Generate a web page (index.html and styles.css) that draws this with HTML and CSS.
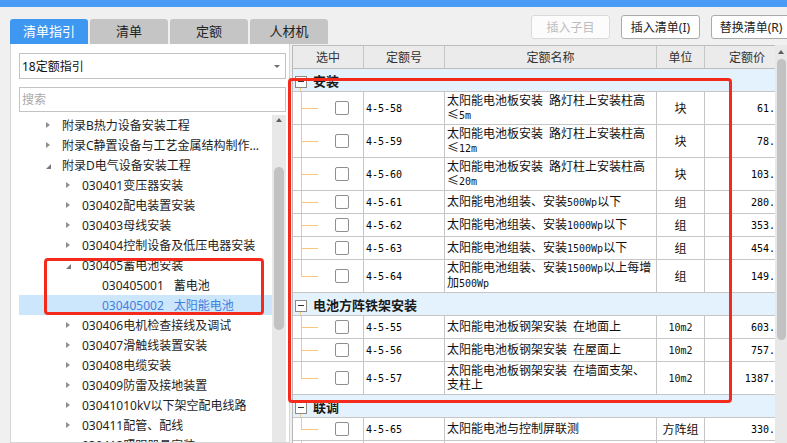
FILE: index.html
```html
<!DOCTYPE html>
<html lang="zh-CN">
<head>
<meta charset="utf-8">
<title>清单指引</title>
<link rel="stylesheet" href="styles.css">
</head>
<body>
<div class="screen">
  <div class="titlebar"></div>
  <div class="band">
    <div class="tabs">
      <div class="tab active">清单指引</div>
      <div class="tab">清单</div>
      <div class="tab">定额</div>
      <div class="tab">人材机</div>
    </div>
    <div class="actions">
      <button class="btn" disabled>插入子目</button>
      <button class="btn">插入清单(I)</button>
      <button class="btn wide">替换清单(R)</button>
    </div>
  </div>
  <div class="work">
    <div class="left">
      <div class="select"><span>18定额指引</span><i class="caret"></i></div>
      <div class="search">搜索</div>
      <div class="treebox">
        <ul class="tree">
          <li class="l1"><i class="tw"></i><span class="lbl">附录B热力设备安装工程</span></li>
          <li class="l1"><i class="tw"></i><span class="lbl">附录C静置设备与工艺金属结构制作安装工程</span></li>
          <li class="l1"><i class="tw open"></i><span class="lbl">附录D电气设备安装工程</span></li>
          <li class="l2"><i class="tw"></i><span class="lbl">030401变压器安装</span></li>
          <li class="l2"><i class="tw"></i><span class="lbl">030402配电装置安装</span></li>
          <li class="l2"><i class="tw"></i><span class="lbl">030403母线安装</span></li>
          <li class="l2"><i class="tw"></i><span class="lbl">030404控制设备及低压电器安装</span></li>
          <li class="l2"><i class="tw open"></i><span class="lbl">030405蓄电池安装</span></li>
          <li class="l3"><span class="lbl"><span class="qd">030405001</span>蓄电池</span></li>
          <li class="l3 selected"><span class="lbl"><span class="qd">030405002</span>太阳能电池</span></li>
          <li class="l2"><i class="tw"></i><span class="lbl">030406电机检查接线及调试</span></li>
          <li class="l2"><i class="tw"></i><span class="lbl">030407滑触线装置安装</span></li>
          <li class="l2"><i class="tw"></i><span class="lbl">030408电缆安装</span></li>
          <li class="l2"><i class="tw"></i><span class="lbl">030409防雷及接地装置</span></li>
          <li class="l2"><i class="tw"></i><span class="lbl">03041010kV以下架空配电线路</span></li>
          <li class="l2"><i class="tw"></i><span class="lbl">030411配管、配线</span></li>
          <li class="l2"><i class="tw"></i><span class="lbl">030412照明器具安装</span></li>
        </ul>
        <div class="vscroll tree-scroll"><i class="up"></i><div class="thumb"></div></div>
      </div>
    </div>
    <div class="right">
      <div class="gridwrap">
        <table class="grid">
          <thead>
            <tr>
              <th class="c-sel">选中</th>
              <th class="c-code">定额号</th>
              <th class="c-name">定额名称</th>
              <th class="c-unit">单位</th>
              <th class="c-price">定额价</th>
            </tr>
          </thead>
          <tbody>
            <tr class="group"><td colspan="5"><span class="gbox"></span>安装</td></tr>
            <tr class="tall">
              <td class="sel"><span class="chk"></span></td>
              <td class="code">4-5-58</td>
              <td class="name">太阳能电池板安装 路灯柱上安装柱高≤<span class="sim">5m</span></td>
              <td class="unit">块</td>
              <td class="price">61.23</td>
            </tr>
            <tr class="tall">
              <td class="sel"><span class="chk"></span></td>
              <td class="code">4-5-59</td>
              <td class="name">太阳能电池板安装 路灯柱上安装柱高≤<span class="sim">12m</span></td>
              <td class="unit">块</td>
              <td class="price">78.86</td>
            </tr>
            <tr class="tall">
              <td class="sel"><span class="chk"></span></td>
              <td class="code">4-5-60</td>
              <td class="name">太阳能电池板安装 路灯柱上安装柱高≤<span class="sim">20m</span></td>
              <td class="unit">块</td>
              <td class="price">103.06</td>
            </tr>
            <tr>
              <td class="sel"><span class="chk"></span></td>
              <td class="code">4-5-61</td>
              <td class="name">太阳能电池组装、安装<span class="sim">500Wp</span>以下</td>
              <td class="unit">组</td>
              <td class="price">280.04</td>
            </tr>
            <tr>
              <td class="sel"><span class="chk"></span></td>
              <td class="code">4-5-62</td>
              <td class="name">太阳能电池组装、安装<span class="sim">1000Wp</span>以下</td>
              <td class="unit">组</td>
              <td class="price">353.86</td>
            </tr>
            <tr>
              <td class="sel"><span class="chk"></span></td>
              <td class="code">4-5-63</td>
              <td class="name">太阳能电池组装、安装<span class="sim">1500Wp</span>以下</td>
              <td class="unit">组</td>
              <td class="price">454.06</td>
            </tr>
            <tr class="tall">
              <td class="sel last"><span class="chk"></span></td>
              <td class="code">4-5-64</td>
              <td class="name">太阳能电池组装、安装<span class="sim">1500Wp</span>以上每增加<span class="sim">500Wp</span></td>
              <td class="unit">组</td>
              <td class="price">149.56</td>
            </tr>
            <tr class="group"><td colspan="5"><span class="gbox"></span>电池方阵铁架安装</td></tr>
            <tr>
              <td class="sel"><span class="chk"></span></td>
              <td class="code">4-5-55</td>
              <td class="name">太阳能电池板钢架安装 在地面上</td>
              <td class="unit sim">10m2</td>
              <td class="price">603.55</td>
            </tr>
            <tr>
              <td class="sel"><span class="chk"></span></td>
              <td class="code">4-5-56</td>
              <td class="name">太阳能电池板钢架安装 在屋面上</td>
              <td class="unit sim">10m2</td>
              <td class="price">757.55</td>
            </tr>
            <tr class="tall">
              <td class="sel last"><span class="chk"></span></td>
              <td class="code">4-5-57</td>
              <td class="name">太阳能电池板钢架安装 在墙面支架、支柱上</td>
              <td class="unit sim">10m2</td>
              <td class="price">1387.23</td>
            </tr>
            <tr class="group"><td colspan="5"><span class="gbox"></span>联调</td></tr>
            <tr>
              <td class="sel last"><span class="chk"></span></td>
              <td class="code">4-5-65</td>
              <td class="name">太阳能电池与控制屏联测</td>
              <td class="unit">方阵组</td>
              <td class="price">330.23</td>
            </tr>
            <tr>
              <td class="sel"></td>
              <td class="code"></td>
              <td class="name"></td>
              <td class="unit"></td>
              <td class="price"></td>
            </tr>
          </tbody>
        </table>
      </div>
      <div class="vscroll grid-scroll"><i class="up"></i><div class="thumb"></div></div>
    </div>
  </div>
  <div class="mark mark-tree"></div>
  <div class="mark mark-grid"></div>
</div>
</body>
</html>
```
FILE: styles.css
```css
* { box-sizing: border-box; }

html, body {
  margin: 0;
  padding: 0;
  overflow: hidden;
}

body {
  width: 787px;
  height: 443px;
  background: #f0f0f0;
  font-family: "Noto Sans", "Noto Sans CJK SC", sans-serif;
  font-size: 12px;
  color: #222;
}

.screen {
  position: relative;
  width: 787px;
  height: 443px;
  overflow: hidden;
}

.titlebar {
  height: 7px;
  background: #4a9bf5;
}

/* ---------- tabs + toolbar band ---------- */
.band {
  display: flex;
  height: 37px;
}

.tabs {
  display: flex;
  gap: 2px;
  margin: 12px 0 0 10px;
  height: 25px;
}

.tab {
  width: 78px;
  height: 25px;
  line-height: 25px;
  text-align: center;
  background: #c5c5c5;
  color: #222;
  font-size: 13px;
  border-radius: 3px 3px 0 0;
}

.tab.active {
  background: #3e97f0;
  color: #fff;
}

.actions {
  display: flex;
  gap: 11px;
  margin: 8px -4px 0 auto;
  height: 24px;
}

.btn {
  width: 79px;
  height: 24px;
  padding: 0;
  border: 1px solid #ababab;
  border-radius: 3px;
  background: #fff;
  color: #222;
  font-family: inherit;
  font-size: 12px;
  flex-shrink: 0;
}

.btn.wide { width: 80px; }

.btn:disabled {
  color: #bdbdbd;
  border-color: #dadada;
  background: #fcfcfc;
}

/* ---------- work area ---------- */
.work {
  display: flex;
  height: 399px;
}

.left {
  width: 280px;
  margin-left: 10px;
  background: #fff;
  border: 1px solid #d6d6d6;
  border-top: 0;
  padding: 9px 3px 0 8px;
  display: flex;
  flex-direction: column;
}

.select {
  height: 26px;
  border: 1px solid #c3c3c3;
  display: flex;
  align-items: center;
  justify-content: space-between;
  padding: 0 5px 0 2px;
  color: #111;
}

.caret {
  width: 0;
  height: 0;
  border-top: 3px solid #707070;
  border-left: 3px solid transparent;
  border-right: 3px solid transparent;
}

.search {
  height: 25px;
  margin-top: 8px;
  border: 1px solid #c3c3c3;
  color: #a9a9a9;
  padding-left: 2px;
  line-height: 23px;
}

.treebox {
  display: flex;
  flex: 1;
  margin-top: 3px;
  min-height: 0;
}

.tree {
  flex: 1;
  min-width: 0;
  list-style: none;
  margin: 0;
  padding: 0;
  overflow: hidden;
}

.tree li {
  height: 20px;
  display: flex;
  align-items: center;
  padding-right: 10px;
  white-space: nowrap;
  color: #1e1e1e;
}

.tree li.l1 { padding-left: 27px; }
.tree li.l2 { padding-left: 47px; }
.tree li.l3 { padding-left: 83px; }

.tree li.selected {
  background: #cce6fc;
  color: #3f7fe0;
}

.tw {
  flex-shrink: 0;
  width: 0;
  height: 0;
  margin-right: 12px;
  border-left: 4px solid #909090;
  border-top: 3.5px solid transparent;
  border-bottom: 3.5px solid transparent;
}

.tw.open {
  margin-right: 11px;
  margin-top: 3px;
  border-left: 5px solid transparent;
  border-top: 0;
  border-bottom: 5px solid #7a7a7a;
}

.lbl {
  min-width: 0;
  overflow: hidden;
  text-overflow: ellipsis;
}

.qd { margin-right: 10px; }

/* ---------- scrollbars ---------- */
.vscroll {
  flex-shrink: 0;
  background: #e8e8e8;
  display: flex;
  flex-direction: column;
  align-items: center;
}

.up {
  width: 0;
  height: 0;
  border-bottom: 4px solid #5f5f5f;
  border-left: 3.5px solid transparent;
  border-right: 3.5px solid transparent;
}

.thumb {
  background: #c2c2c2;
  border-radius: 5px;
}

.tree-scroll { width: 14px; }
.tree-scroll .up { margin-top: 3px; }
.tree-scroll .thumb { width: 10px; height: 163px; margin-top: 45px; }

.grid-scroll { width: 12px; }
.grid-scroll .up { margin-top: 5px; }
.grid-scroll .thumb { width: 9px; height: 281px; margin-top: 5px; }

/* ---------- grid ---------- */
.right {
  flex: 1;
  margin: 1px 0 0 2px;
  border-left: 1px solid #b8b8b8;
  background: #fff;
  display: flex;
  min-width: 0;
}

.gridwrap {
  flex: 1;
  min-width: 0;
  overflow: hidden;
  border-top: 1px solid #bdbdbd;
}

.grid {
  border-collapse: separate;
  border-spacing: 0;
  table-layout: fixed;
  width: 496px;
}

.c-sel { width: 71px; }
.c-code { width: 81px; }
.c-name { width: 212px; }
.c-unit { width: 48px; }
.c-price { width: 84px; }

.grid tr { height: 23px; }
.grid tr.tall { height: 33px; }

.grid th,
.grid td {
  border-right: 1px solid #c6c6c6;
  border-bottom: 1px solid #c6c6c6;
  padding: 0 2px;
  overflow: hidden;
  white-space: nowrap;
  vertical-align: middle;
}

.grid th {
  background: #ebebeb;
  font-weight: normal;
  color: #333;
  text-align: center;
  border-bottom-color: #bdbdbd;
}

.grid th.c-price,
.grid td.price { border-right: 0; }

.grid td { color: #111; }

.grid tr.group td {
  background: #e4f2fd;
  border-right: 0;
  font-size: 13px;
  font-weight: 700;
  color: #1a1a1a;
}

.gbox {
  position: relative;
  display: inline-block;
  width: 12px;
  height: 12px;
  margin-right: 6px;
  vertical-align: -2px;
  border: 1px solid #8a8a8a;
  background: #fff;
}

.gbox::before {
  content: "";
  position: absolute;
  left: 2px;
  top: 4px;
  width: 6px;
  height: 1px;
  background: #333;
}

.gbox::after {
  content: "";
  position: absolute;
  left: 4px;
  top: 11px;
  width: 1px;
  height: 8px;
  background: #f7c77f;
}

.grid td.sel {
  position: relative;
  padding: 0;
}

.grid td.sel::before {
  content: "";
  position: absolute;
  left: 8px;
  top: 0;
  bottom: -1px;
  width: 1px;
  background: #f7c77f;
}

.grid td.sel.last::before {
  bottom: auto;
  height: 50%;
}

.grid td.sel::after {
  content: "";
  position: absolute;
  left: 8px;
  top: 50%;
  width: 17px;
  height: 1px;
  background: #f7c77f;
}

.chk {
  display: block;
  width: 14px;
  height: 14px;
  margin-left: 42px;
  border: 1px solid #8f8f8f;
  border-radius: 2px;
  background: #fff;
}

.grid td.code {
  font-family: "DejaVu Sans Mono", monospace;
  font-size: 10px;
  color: #000;
}

.grid td.name {
  white-space: normal;
  line-height: 14px;
  padding: 0 3px 0 2px;
  word-spacing: 3px;
}

.sim {
  font-family: "DejaVu Sans Mono", monospace;
  font-size: 10px;
  word-spacing: 0;
}

.grid td.unit { text-align: center; }

.grid td.price {
  text-align: right;
  padding-right: 2px;
  font-family: "DejaVu Sans Mono", monospace;
  font-size: 10px;
  color: #000;
}

/* ---------- annotation marks ---------- */
.mark {
  position: absolute;
  border: 3px solid #f42a1d;
  border-radius: 4px;
  pointer-events: none;
}

.mark-tree {
  left: 44px;
  top: 258px;
  width: 220px;
  height: 57px;
}

.mark-grid {
  left: 288px;
  top: 78px;
  width: 444px;
  height: 325px;
}
```
